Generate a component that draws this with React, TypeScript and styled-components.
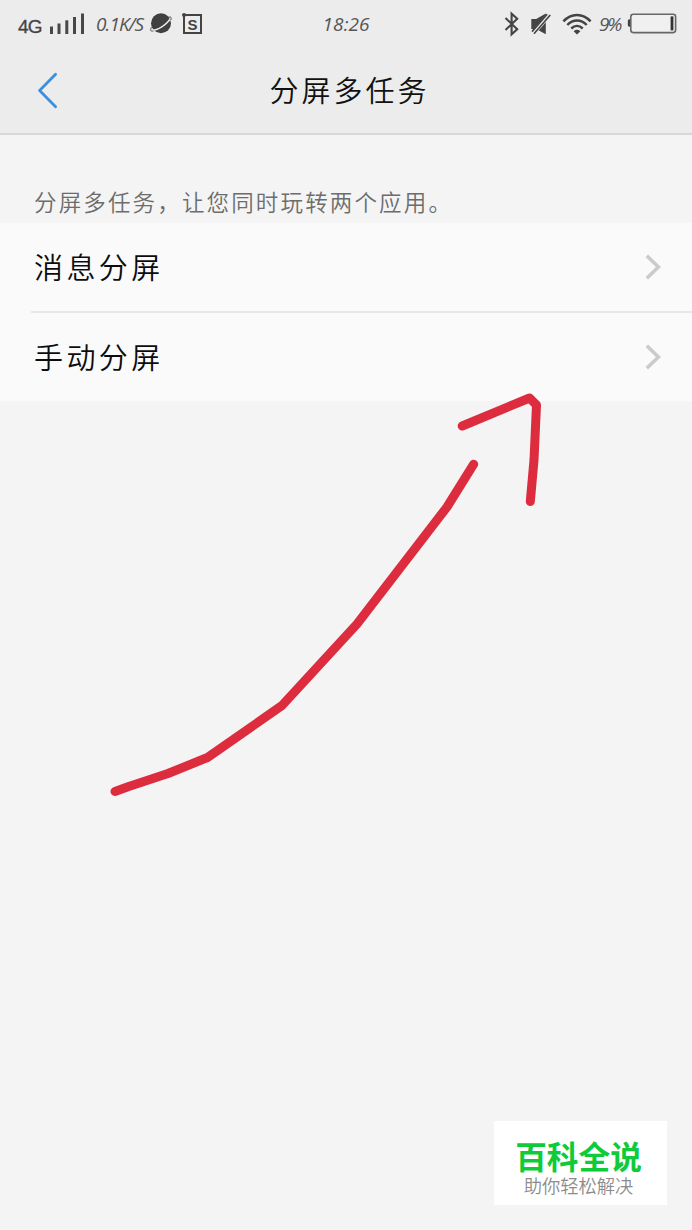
import React from "react";
import styled, { createGlobalStyle } from "styled-components";

const GlobalStyle = createGlobalStyle`
  * { box-sizing: border-box; }
  body {
    margin: 0;
    background: #f4f4f4;
    font-family: "Noto Sans CJK SC", sans-serif;
  }
`;

const Screen = styled.div`
  position: relative;
  width: 692px;
  height: 1230px;
  overflow: hidden;
  background: #f4f4f4;
`;

const TopArea = styled.header`
  height: 135px;
  background: #ececec;
  border-bottom: 2px solid #d8d8d8;
`;

const StatusBar = styled.div`
  display: grid;
  grid-template-columns: 1fr 50px 1fr;
  align-items: center;
  height: 48px;
  padding: 0 15px 0 18px;
  color: #444;
`;

const StatusGroup = styled.div<{ $end?: boolean }>`
  display: flex;
  align-items: center;
  height: 48px;
  justify-content: ${(p) => (p.$end ? "flex-end" : "flex-start")};
  svg { display: block; flex: none; }
`;

const AlertIcons = styled.div`
  display: flex;
  align-items: center;
  gap: 10px;
`;

const Network = styled.span`
  width: 31px;
  padding-top: 6px;
  font: 400 19px/24px "Liberation Sans", sans-serif;
  letter-spacing: -0.8px;
  -webkit-text-stroke: 0.3px #444;
`;

const Script = styled.span<{ $width: number; $left?: number; $tracking?: number }>`
  flex: none;
  width: ${(p) => p.$width}px;
  margin-left: ${(p) => p.$left ?? 0}px;
  font: italic 400 19px/24px "Open Sans", sans-serif;
  letter-spacing: ${(p) => p.$tracking ?? 0}px;
  white-space: nowrap;
  color: #555;
`;

const NavBar = styled.div`
  display: grid;
  grid-template-columns: 100px 1fr 100px;
  align-items: center;
  height: 85px;
`;

const BackButton = styled.button`
  height: 85px;
  padding: 0 0 0 36px;
  border: 0;
  background: none;
  text-align: left;
  svg { display: block; }
`;

const Title = styled.h1`
  margin: 0;
  padding: 0 0 4px 7px;
  font-size: 29px;
  line-height: 40px;
  font-weight: 350;
  letter-spacing: 3px;
  text-align: center;
  color: #111;
`;

const Note = styled.p`
  height: 88px;
  margin: 0;
  padding: 49px 0 0 34px;
  font-size: 22.5px;
  line-height: 34px;
  font-weight: 350;
  letter-spacing: 2.15px;
  white-space: nowrap;
  color: #6c6c6c;
`;

const List = styled.ul`
  margin: 0;
  padding: 0;
  list-style: none;
  background: #fafafa;
`;

const Row = styled.li`
  display: flex;
  align-items: center;
  justify-content: space-between;
  height: 88px;
  padding: 0 30px 0 34px;
`;

const Divider = styled.li`
  height: 2px;
  margin-left: 31px;
  background: #e7e7e7;
`;

const RowLabel = styled.span`
  padding-bottom: 3px;
  font-size: 29px;
  line-height: 40px;
  font-weight: 350;
  letter-spacing: 3.4px;
  color: #0c0c0c;
`;

const Annotation = styled.svg`
  position: absolute;
  left: 100px;
  top: 380px;
  pointer-events: none;
`;

const Badge = styled.aside`
  position: absolute;
  left: 494px;
  top: 1121px;
  display: flex;
  flex-direction: column;
  align-items: center;
  width: 173px;
  height: 84px;
  padding: 17px 4px 0 0;
  background: #fff;
`;

const BadgeTitle = styled.strong`
  font-size: 31.7px;
  line-height: 34px;
  font-weight: 700;
  color: #0fcb39;
`;

const BadgeText = styled.span`
  font-size: 18.3px;
  line-height: 26px;
  font-weight: 350;
  color: #8c8c8c;
`;

const SignalIcon = () => (
  <svg width="36" height="22" viewBox="0 0 36 22" fill="#484848">
    <rect x="1" y="13.5" width="3" height="7.5" />
    <rect x="8.5" y="10.5" width="3" height="10.5" />
    <rect x="16.3" y="7.3" width="3" height="13.7" />
    <rect x="24" y="4" width="3" height="17" />
    <rect x="32" y="0.5" width="3" height="20.5" />
  </svg>
);

const PlanetIcon = () => (
  <svg width="22" height="22" viewBox="0 0 22 22">
    <circle cx="11" cy="10.2" r="10" fill="#404040" />
    <path d="M1.4 17.2C7 17.6 17 12 20.8 4.6" fill="none" stroke="#ececec" strokeWidth="1.4" />
    <path d="M1.4 14.2C0 17.4 0.6 18.6 3.4 18M19 4.2C21 3.4 21.6 4.6 20.8 7" fill="none" stroke="#505050" strokeWidth="1" />
  </svg>
);

const AppBox = styled.span`
  position: relative;
  display: flex;
  align-items: center;
  justify-content: center;
  width: 19px;
  height: 20px;
  margin-left: 11px;
  border: 2px solid #444;
  font: 700 15px/15px "Liberation Sans", sans-serif;

  &::before {
    content: "";
    position: absolute;
    left: -3px;
    top: -3px;
    width: 4px;
    height: 4px;
    border-radius: 50%;
    background: #444;
  }
`;

const BluetoothIcon = () => (
  <svg width="16" height="26" viewBox="0 0 16 26" fill="none" stroke="#444" strokeWidth="2.1">
    <path d="M1.5 7L13.2 18.3L7.6 23.4V2.6L13.2 7.7L1.5 19" />
  </svg>
);

const MutedIcon = () => (
  <svg width="22" height="24" viewBox="0 0 22 24">
    <path d="M1.3 7H6.2L15.8 1.5V22.3L6.2 17H1.3Z" fill="#444" />
    <path d="M2.4 22.3L19.4 2.6" stroke="#ececec" strokeWidth="4.6" />
    <path d="M2 19.6L17.2 2.2M4 21.8L20.3 3" stroke="#444" strokeWidth="1.6" />
  </svg>
);

const WifiIcon = () => (
  <svg width="30" height="22" viewBox="0 0 30 22" fill="none" stroke="#444" strokeWidth="2.5">
    <path d="M1.4 8.4C9 -0.2 21 -0.2 28.6 8.4" />
    <path d="M5.3 12C11 6 19 6 24.7 12" />
    <path d="M9.3 15.5C12.8 12.1 17.2 12.1 20.7 15.5" />
    <path d="M11.6 18.2Q15 15.4 18.4 18.2L15 21.4Z" fill="#444" stroke="none" />
  </svg>
);

const BatteryIcon = () => (
  <svg width="50" height="22" viewBox="0 0 50 22">
    <path d="M3.5 6.2H2.2Q0.8 6.2 0.8 8V12Q0.8 13.8 2.2 13.8H3.5Z" fill="#444" />
    <rect x="3.8" y="1.2" width="44.8" height="18.4" rx="2.5" fill="#f0f0f0" stroke="#666" strokeWidth="1.6" />
    <rect x="43.6" y="3.4" width="2.8" height="14" fill="#333" />
  </svg>
);

const Chevron = () => (
  <svg width="18" height="28" viewBox="0 0 18 28" fill="none" stroke="#cbcbcb" strokeWidth="3.6">
    <path d="M2.8 2.8L14.4 14L2.8 25.2" />
  </svg>
);

const items = ["消息分屏", "手动分屏"];

export default function App() {
  return (
    <Screen>
      <GlobalStyle />
      <TopArea>
        <StatusBar>
          <StatusGroup>
            <Network>4G</Network>
            <SignalIcon />
            <Script $width={54} $left={11} $tracking={-0.9}>0.1K/S</Script>
            <PlanetIcon />
            <AppBox>S</AppBox>
          </StatusGroup>
          <Script $width={50} $tracking={0.1}>18:26</Script>
          <StatusGroup $end>
            <AlertIcons>
              <BluetoothIcon />
              <MutedIcon />
              <WifiIcon />
            </AlertIcons>
            <Script $width={28} $left={7} $tracking={-2.2}>9%</Script>
            <BatteryIcon />
          </StatusGroup>
        </StatusBar>
        <NavBar>
          <BackButton aria-label="返回">
            <svg width="24" height="38" viewBox="0 0 24 38" fill="none" stroke="#3d8fdb" strokeWidth="2.8" strokeLinecap="round" strokeLinejoin="round">
              <path d="M19.6 2.3L3.6 18.5L19.6 34.7" />
            </svg>
          </BackButton>
          <Title>分屏多任务</Title>
        </NavBar>
      </TopArea>
      <Note>分屏多任务，让您同时玩转两个应用。</Note>
      <List>
        {items.map((label, index) => (
          <React.Fragment key={label}>
            {index > 0 && <Divider />}
            <Row>
              <RowLabel>{label}</RowLabel>
              <Chevron />
            </Row>
          </React.Fragment>
        ))}
      </List>
      <Annotation width="450" height="430" viewBox="100 380 450 430" fill="none" stroke="#dc2c3e" strokeWidth="9" strokeLinecap="round" strokeLinejoin="round">
        <path d="M115 791.5L128 786.8L168 773.5L207.5 757.5L282 705.5L357 624L447 507L473.7 464.2" />
        <path d="M462.2 426L529.5 398L536.5 405L534 460L530.3 501.5" />
      </Annotation>
      <Badge>
        <BadgeTitle>百科全说</BadgeTitle>
        <BadgeText>助你轻松解决</BadgeText>
      </Badge>
    </Screen>
  );
}
